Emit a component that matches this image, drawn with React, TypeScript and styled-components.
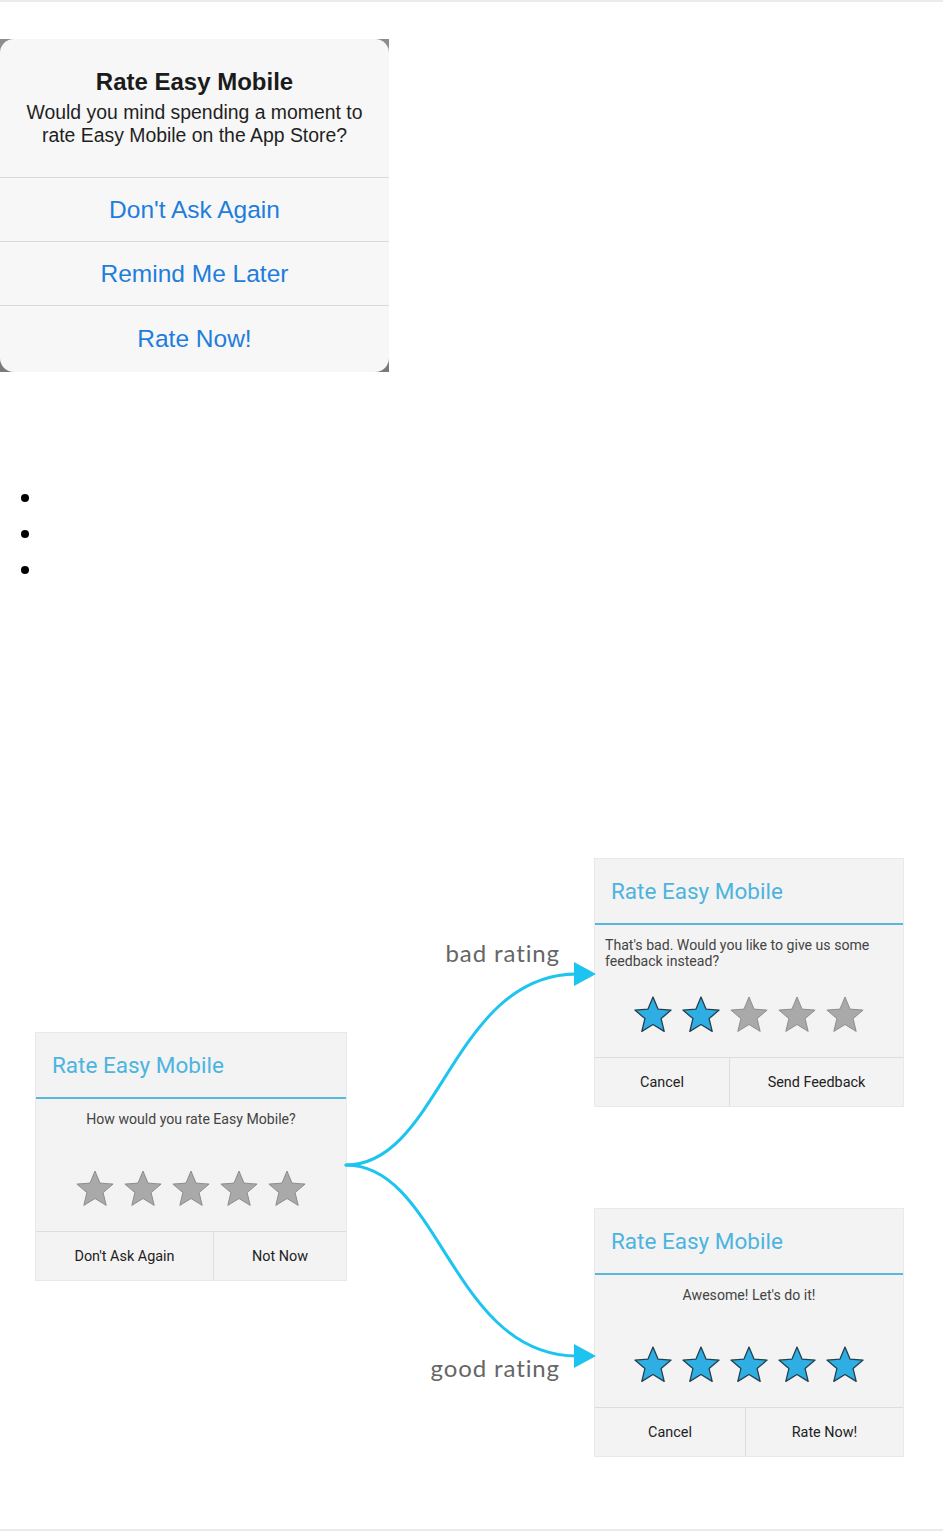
import React from "react";
import styled, { createGlobalStyle } from "styled-components";

const Global = createGlobalStyle`
  html, body { margin: 0; padding: 0; background: #ffffff; }
  body { font-family: "Liberation Sans", Arial, sans-serif; }
`;

const Page = styled.div`
  width: 943px;
  border-top: 2px solid #ebebeb;
  border-bottom: 2px solid #ebebeb;
  display: flex;
  flex-direction: column;
`;

/* ---------- iOS alert ---------- */
const IosFrame = styled.div`
  margin-top: 37px;
  width: 389px;
  height: 333px;
  background: linear-gradient(180deg, #8d8d8d, #7a7a7a);
`;

const IosDialog = styled.div`
  height: 100%;
  background: #f7f7f7;
  border-radius: 14px;
  display: flex;
  flex-direction: column;
  font-family: "Liberation Sans", Arial, sans-serif;
  overflow: hidden;
`;

const IosHeader = styled.div`
  height: 139px;
  box-sizing: border-box;
  padding-top: 28px;
  text-align: center;
  border-bottom: 1px solid #dadada;
`;

const IosTitle = styled.div`
  font-size: 24px;
  font-weight: 700;
  line-height: 30px;
  color: #1b1b1b;
  margin-bottom: 4px;
`;

const IosMessage = styled.div`
  font-size: 19.4px;
  line-height: 23px;
  color: #1f1f1f;
`;

const IosButton = styled.div<{ $last?: boolean }>`
  height: 64px;
  box-sizing: border-box;
  display: flex;
  align-items: center;
  justify-content: center;
  font-size: 24.5px;
  color: #1f7ddc;
  border-bottom: ${(p) => (p.$last ? "none" : "1px solid #dadada")};
  flex: ${(p) => (p.$last ? 1 : "none")};
`;

/* ---------- bullets ---------- */
const Bullets = styled.ul`
  margin: 107px 0 0 0;
  padding-left: 44px;
  font-size: 27px;
  list-style: disc;
`;

const Bullet = styled.li`
  height: 36px;
  line-height: 36px;
`;

/* ---------- diagram ---------- */
const Canvas = styled.div`
  position: relative;
  margin-top: 254px;
  margin-bottom: 38px;
  width: 943px;
  height: 650px;
`;

const Node = styled.div<{ $x: number; $y: number; $w: number }>`
  position: absolute;
  left: ${(p) => p.$x}px;
  top: ${(p) => p.$y}px;
  width: ${(p) => p.$w}px;
  background: #f3f3f3;
  box-shadow: 0 0 0 1px #e9e9e9;
  font-family: Roboto, "Noto Sans", sans-serif;
  display: flex;
  flex-direction: column;
`;

const DTitle = styled.div`
  height: 64px;
  display: flex;
  align-items: center;
  padding-left: 16px;
  font-size: 22.5px;
  color: #4cb4df;
  border-bottom: 2px solid #58b7dd;
`;

const DBody = styled.div`
  height: 132px;
  display: grid;
  grid-template-rows: 70px 40px 1fr;
`;

const DText = styled.div<{ $align: "left" | "center" }>`
  padding: 12px 10px 0 10px;
  font-size: 14.1px;
  line-height: 16px;
  color: #444444;
  text-align: ${(p) => p.$align};
`;

const Stars = styled.div`
  display: flex;
  justify-content: center;
  gap: 8px;
`;

const StarSvg = styled.svg`
  width: 40px;
  height: 40px;
  display: block;
`;

const DButtons = styled.div<{ $split: number }>`
  height: 48px;
  display: grid;
  grid-template-columns: ${(p) => p.$split}px 1fr;
  border-top: 1px solid #dddddd;
`;

const DButton = styled.div`
  display: flex;
  align-items: center;
  justify-content: center;
  font-size: 14.4px;
  color: #222222;
  & + & {
    border-left: 1px solid #dddddd;
  }
`;

const Arrows = styled.svg`
  position: absolute;
  left: 0;
  top: 0;
  width: 943px;
  height: 650px;
  pointer-events: none;
`;

const Label = styled.div<{ $y: number }>`
  position: absolute;
  right: 383px;
  top: ${(p) => p.$y}px;
  font-family: Lato, "Open Sans", sans-serif;
  font-size: 24px;
  line-height: 30px;
  letter-spacing: 0.9px;
  color: #666666;
`;

const STAR_POINTS =
  "20,2 25,14.1 38.1,15.1 28.1,23.6 31.2,36.4 20,29.5 8.8,36.4 11.9,23.6 1.9,15.1 15,14.1";

function Star({ on }: { on: boolean }) {
  return (
    <StarSvg viewBox="0 0 40 40">
      <polygon
        points={STAR_POINTS}
        fill={on ? "#2eaee3" : "#a9a9a9"}
        stroke={on ? "#243f4e" : "#8e8e8e"}
        strokeWidth={on ? 1.3 : 1}
        strokeLinejoin="round"
      />
    </StarSvg>
  );
}

type DialogProps = {
  x: number;
  y: number;
  w: number;
  text: React.ReactNode;
  align: "left" | "center";
  filled: number;
  split: number;
  buttons: [string, string];
};

function AndroidDialog({ x, y, w, text, align, filled, split, buttons }: DialogProps) {
  return (
    <Node $x={x} $y={y} $w={w}>
      <DTitle>Rate Easy Mobile</DTitle>
      <DBody>
        <DText $align={align}>{text}</DText>
        <Stars>
          {[0, 1, 2, 3, 4].map((i) => (
            <Star key={i} on={i < filled} />
          ))}
        </Stars>
      </DBody>
      <DButtons $split={split}>
        <DButton>{buttons[0]}</DButton>
        <DButton>{buttons[1]}</DButton>
      </DButtons>
    </Node>
  );
}

export default function App() {
  return (
    <>
      <Global />
      <Page>
        <IosFrame>
          <IosDialog>
            <IosHeader>
              <IosTitle>Rate Easy Mobile</IosTitle>
              <IosMessage>
                Would you mind spending a moment to
                <br />
                rate Easy Mobile on the App Store?
              </IosMessage>
            </IosHeader>
            <IosButton>Don't Ask Again</IosButton>
            <IosButton>Remind Me Later</IosButton>
            <IosButton $last>Rate Now!</IosButton>
          </IosDialog>
        </IosFrame>

        <Bullets>
          <Bullet />
          <Bullet />
          <Bullet />
        </Bullets>

        <Canvas>
          <AndroidDialog
            x={36}
            y={192}
            w={310}
            text="How would you rate Easy Mobile?"
            align="center"
            filled={0}
            split={177}
            buttons={["Don't Ask Again", "Not Now"]}
          />
          <AndroidDialog
            x={595}
            y={18}
            w={308}
            text="That's bad. Would you like to give us some feedback instead?"
            align="left"
            filled={2}
            split={134}
            buttons={["Cancel", "Send Feedback"]}
          />
          <AndroidDialog
            x={595}
            y={368}
            w={308}
            text="Awesome! Let's do it!"
            align="center"
            filled={5}
            split={150}
            buttons={["Cancel", "Rate Now!"]}
          />
          <Arrows viewBox="0 0 943 650">
            <g fill="none" stroke="#1cc4ef" strokeWidth={3} strokeLinecap="round">
              <path d="M346 324 C 440 324, 452 133, 577 133" />
              <path d="M346 324 C 440 324, 452 515, 577 515" />
            </g>
            <polygon points="574,121 596,133 574,145" fill="#1cc4ef" />
            <polygon points="574,503 596,515 574,527" fill="#1cc4ef" />
          </Arrows>
          <Label $y={97}>bad rating</Label>
          <Label $y={512}>good rating</Label>
        </Canvas>
      </Page>
    </>
  );
}
